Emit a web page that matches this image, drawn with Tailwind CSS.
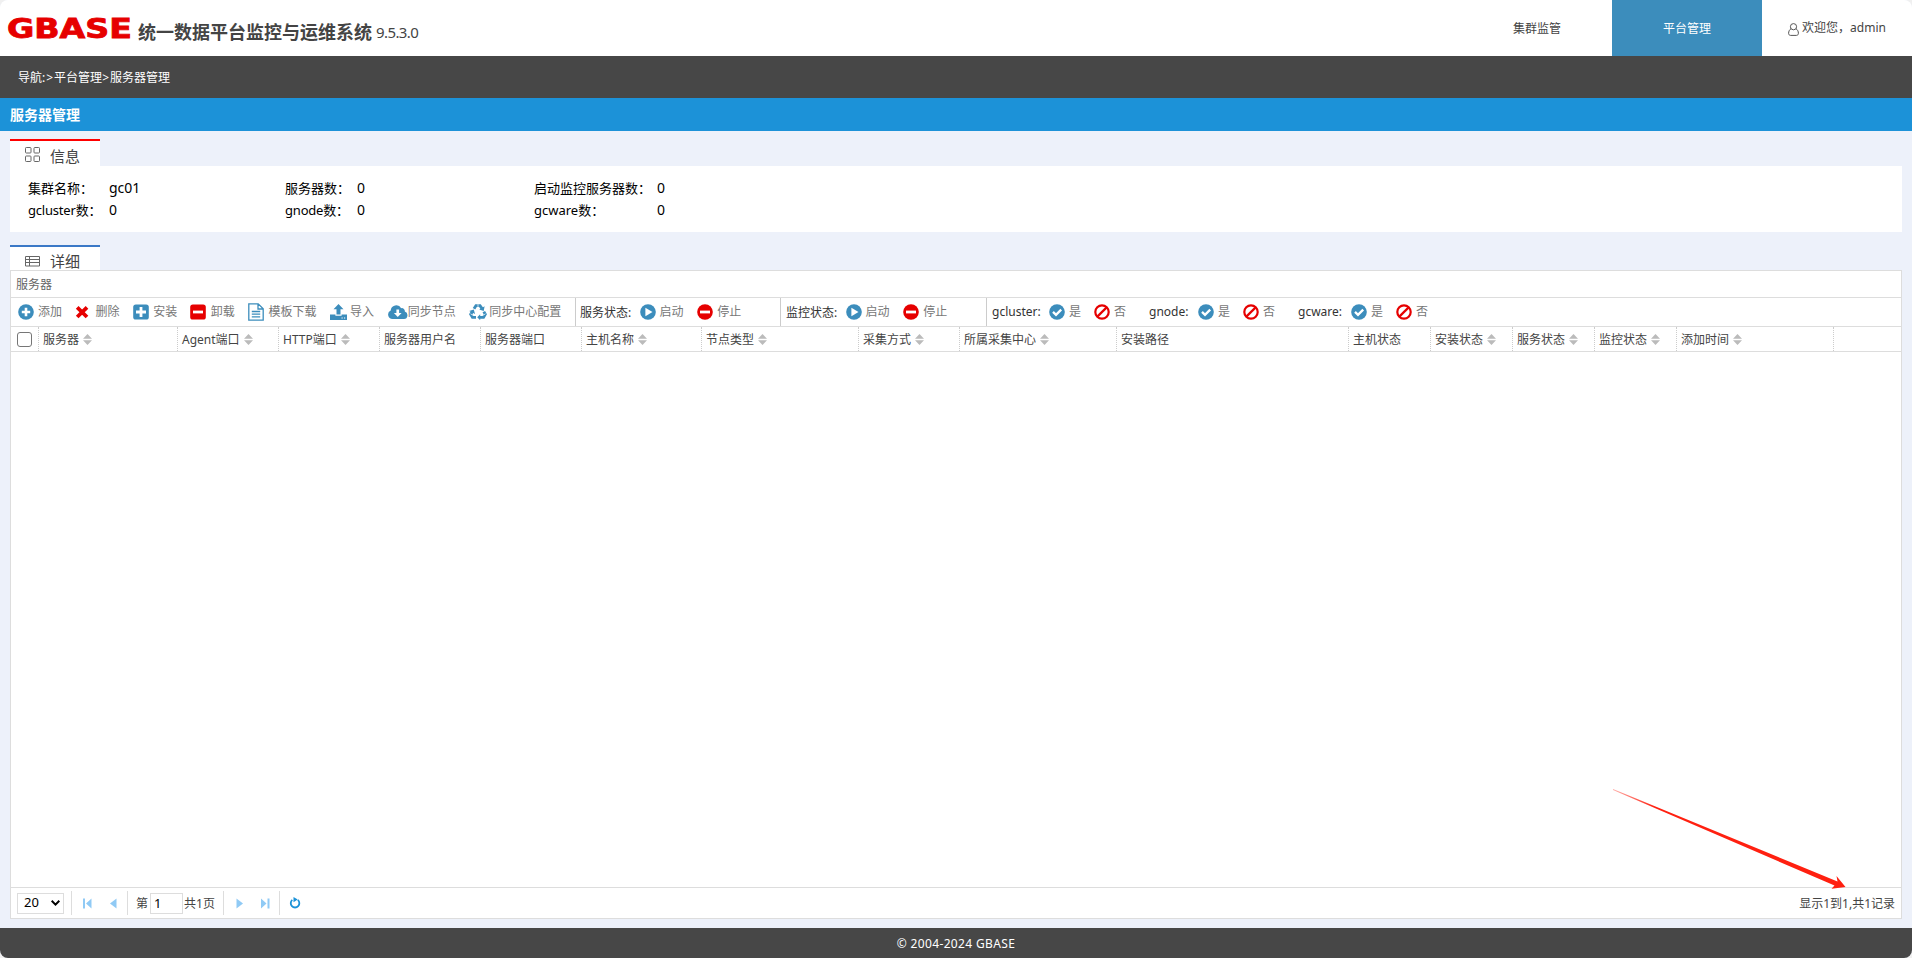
<!DOCTYPE html>
<html lang="zh-CN">
<head>
    <meta charset="UTF-8">
    <meta name="viewport" content="width=device-width, initial-scale=1.0">
    <title>服务器管理</title>
    <script src="https://cdn.jsdelivr.net/npm/@tailwindcss/browser@4"></script>
</head>
<body class="bg-[#f0f0f0] font-['Noto_Sans','Noto_Sans_CJK_SC',sans-serif] text-xs text-[#444]">
    <!-- Icon symbols -->
    <svg class="hidden">
        <symbol id="i-add" viewBox="0 0 16 16"><circle cx="8" cy="8" r="7.8" fill="#3c8dbc"/><path d="M8 3.8v8.4M3.8 8h8.4" stroke="#fff" stroke-width="2.6"/></symbol>
        <symbol id="i-del" viewBox="0 0 16 16"><path d="M3.2 3.4l9.8 9.6M13 3.4l-9.8 9.6" stroke="#e60000" stroke-width="3.8"/></symbol>
        <symbol id="i-plus" viewBox="0 0 16 16"><rect x=".2" y=".4" width="15.6" height="15.2" rx="2.6" fill="#3c8dbc"/><path d="M8 3v10M3 8h10" stroke="#fff" stroke-width="2.8"/></symbol>
        <symbol id="i-minus" viewBox="0 0 16 16"><rect x=".2" y=".4" width="15.6" height="15.2" rx="2.6" fill="#e60000"/><path d="M3 8h10" stroke="#fff" stroke-width="2.8"/></symbol>
        <symbol id="i-file" viewBox="0 0 16 18"><path d="M.8 .8h9.4l5 5v11.4H.8zM10 .8v5.2h5.2M3.8 8.5h8.4M3.8 11.2h8.4M3.8 13.9h8.4" fill="none" stroke="#3c8dbc" stroke-width="1.3"/></symbol>
        <symbol id="i-upload" viewBox="0 0 17 16"><path d="M8.5 0l5 5.3h-3v5.2h-4V5.300h-3zM0 10.600h5.400v1.200h6.200v-1.200H17V16H0z" fill="#3c8dbc"/><path d="M11.500 14h1.200M14 14h1.200" stroke="#fff"/></symbol>
        <symbol id="i-cloud" viewBox="0 0 20 14"><path d="M4.500 14A4.400 4.400 0 0 1 2.700 5.600 5.600 5.600 0 0 1 13.200 3.200 3 3 0 0 1 16.800 6.600 3.800 3.800 0 0 1 16 14z" fill="#3c8dbc"/><path d="M8.400 4.500h2.700v3.600h2.500l-3.850 4-3.850-4h2.500z" fill="#fff"/></symbol>
        <symbol id="i-recycle" viewBox="0 0 18 16"><path d="M5 4.800L7 1.600h4L13 4.600M14.800 7.600l1.500 2.700-1.800 3.100h-4M7 13.400H3.500L1.700 10.300 3.400 7.500" fill="none" stroke="#3c8dbc" stroke-width="2.900"/><path d="M15.600 2.200l-.9 4.700-4.500-1.400zM11.200 10.200v6l-3-3zM.2 7l4.600-1.400 1.200 4.500z" fill="#3c8dbc"/><path d="M9 .2v3M1.500 9.800l2.400 1.500M16.500 9.800l-2.400 1.500" stroke="#fff" stroke-width=".7"/></symbol>
        <symbol id="i-play" viewBox="0 0 16 16"><circle cx="8" cy="8" r="7.800" fill="#3c8dbc"/><path d="M5.400 3.700v8.600L12.500 8z" fill="#fff"/></symbol>
        <symbol id="i-stop" viewBox="0 0 16 16"><circle cx="8" cy="8" r="7.800" fill="#e60000"/><path d="M3 8h10" stroke="#fff" stroke-width="2.800"/></symbol>
        <symbol id="i-yes" viewBox="0 0 16 16"><circle cx="8" cy="8" r="7.800" fill="#3c8dbc"/><path d="M4 7.900l3 3 5.200-5.300" fill="none" stroke="#fff" stroke-width="2.300"/></symbol>
        <symbol id="i-no" viewBox="0 0 16 16"><circle cx="8" cy="8" r="6.700" fill="none" stroke="#e60000" stroke-width="2.200"/><path d="M3.600 12.400l8.800-8.800" stroke="#e60000" stroke-width="2.200"/></symbol>
        <symbol id="i-sort" viewBox="0 0 9 11"><path d="M0 4.700L4.500 0 9 4.700zM0 6.300h9L4.500 11z" fill="#bbb"/></symbol>
    </svg>

    <div class="flex h-[958px] w-[1912px] flex-col overflow-hidden rounded-lg bg-[#edf1fa]">
        <header class="flex h-14 shrink-0 bg-white">
            <div class="flex flex-1 items-center pl-[7px]">
                <svg width="125" height="32" class="shrink-0">
                    <text x="0" y="26" textLength="125" lengthAdjust="spacingAndGlyphs" fill="#e60000" stroke="#e60000" stroke-width=".8" font-family="DejaVu Sans" font-weight="bold" font-size="26">GBASE</text>
                </svg>
                <h1 class="mt-2 ml-1.5 text-lg leading-6 font-bold">统一数据平台监控与运维系统</h1>
                <span class="mt-2 ml-1 text-[15px] leading-6 tracking-[-0.6px]">9.5.3.0</span>
            </div>
            <nav class="flex text-center leading-[58px]">
                <a class="w-[150px]">集群监管</a>
                <a class="w-[150px] bg-[#3c8dbc] text-white">平台管理</a>
                <a class="flex w-[150px] items-center justify-center gap-[3px]">
                    <svg width="11" height="13" viewBox="0 0 11 13" fill="none" stroke="#555" class="mt-0.5"><circle cx="5.500" cy="3.700" r="3.100"/><path d="M3 5.700C1.400 6.700.6 8.500.6 10.300c0 1.300.8 2.100 2 2.100h5.800c1.200 0 2-.8 2-2.100C10.400 8.500 9.600 6.700 8 5.700"/></svg>
                    <span>欢迎您，admin</span>
                </a>
            </nav>
        </header>
        <div class="h-[42px] shrink-0 bg-[#474747] pl-[18px] leading-[43px] text-white">导航<span class="tracking-[1px]">:&gt;</span>平台管理<span class="tracking-[1px]">&gt;</span>服务器管理</div>
        <div class="h-[33px] shrink-0 bg-[#1c92d8] pl-2.5 text-sm leading-[34px] font-bold text-white">服务器管理</div>

        <main class="flex flex-1 flex-col px-2.5 pt-2 pb-[9px]">
            <div class="flex h-[27px] w-[90px] border-t-2 border-[#f00] bg-white pl-[15px] text-[15px]">
                <svg width="15" height="15" fill="none" stroke="#666" class="mt-1.5"><rect x=".5" y=".5" width="5.500" height="5.500" rx=".8"/><rect x="9" y=".5" width="5.500" height="5.500" rx=".8"/><rect x=".5" y="9" width="5.500" height="5.500" rx=".8"/><rect x="9" y="9" width="5.500" height="5.500" rx=".8"/></svg>
                <span class="mt-[5px] ml-2.5 leading-5">信息</span>
            </div>
            <div class="grid h-[66px] grid-cols-[81px_176px_72px_177px_123px_1fr] grid-rows-[22px_22px] bg-white pt-3 pl-[18px] text-[13px] leading-[21px] text-black">
                <span>集群名称：</span><span class="text-sm leading-5">gc01</span>
                <span>服务器数：</span><span class="text-sm leading-5">0</span>
                <span>启动监控服务器数：</span><span class="text-sm leading-5">0</span>
                <span class="tracking-[-0.2px]">gcluster数：</span><span class="text-sm leading-5">0</span>
                <span class="tracking-[-0.2px]">gnode数：</span><span class="text-sm leading-5">0</span>
                <span>gcware数：</span><span class="text-sm leading-5">0</span>
            </div>

            <div class="mt-[13px] flex h-[25px] w-[90px] shrink-0 border-t-2 border-[#3b78c6] bg-white pl-[15px] text-[15px]">
                <svg width="15" height="11" fill="none" stroke="#666" class="mt-[9px]"><path d="M.5 .5h14v9.500H.5zM.5 3.500h14M.5 6.500h14M4.500 .5v9.500"/></svg>
                <span class="mt-[5px] ml-2.5 leading-[18px]">详细</span>
            </div>
            <section class="flex flex-1 flex-col border border-[#ddd] bg-white">
                <div class="h-[27px] border-b border-[#ddd] pl-[5px] leading-[27px] text-[#666]">服务器</div>

                <!-- Toolbar -->
                <div class="flex h-[29px] border-b border-[#ddd] leading-[30px] whitespace-nowrap text-[#777]">
                    <div class="flex w-[565px] gap-[9.6px] border-r border-[#ccc] pl-[3px]">
                        <a class="flex items-center"><span class="flex w-6 justify-center"><svg width="16" height="16"><use href="#i-add"/></svg></span>添加</a>
                        <a class="flex items-center"><span class="flex w-6 justify-start pl-0.5"><svg width="16" height="16"><use href="#i-del"/></svg></span>删除</a>
                        <a class="flex items-center"><span class="flex w-6 justify-center"><svg width="16" height="16"><use href="#i-plus"/></svg></span>安装</a>
                        <a class="flex items-center"><span class="flex w-6 justify-start pl-[3px]"><svg width="16" height="16"><use href="#i-minus"/></svg></span>卸载</a>
                        <a class="flex items-center"><span class="flex w-6 justify-center"><svg width="16" height="18"><use href="#i-file"/></svg></span>模板下载</a>
                        <a class="flex items-center"><span class="flex w-6 justify-center"><svg width="17" height="16"><use href="#i-upload"/></svg></span>导入</a>
                        <a class="flex items-center"><span class="flex w-6 justify-end"><svg width="20" height="14"><use href="#i-cloud"/></svg></span>同步节点</a>
                        <a class="flex items-center"><span class="flex w-6 justify-center pl-0.5"><svg width="18" height="16"><use href="#i-recycle"/></svg></span>同步中心配置</a>
                    </div>
                    <div class="flex w-[205px] gap-[9.6px] border-r border-[#ccc] pl-1">
                        <span class="-mr-[5px] w-[51px] text-[#333]">服务状态:</span>
                        <a class="flex items-center"><span class="flex w-6 justify-center"><svg width="16" height="16"><use href="#i-play"/></svg></span>启动</a>
                        <a class="flex items-center"><span class="flex w-6 justify-center"><svg width="16" height="16"><use href="#i-stop"/></svg></span>停止</a>
                    </div>
                    <div class="flex w-[206px] gap-[9.6px] border-r border-[#ccc] pl-[5px]">
                        <span class="-mr-[5px] w-[51px] text-[#333]">监控状态:</span>
                        <a class="flex items-center"><span class="flex w-6 justify-center"><svg width="16" height="16"><use href="#i-play"/></svg></span>启动</a>
                        <a class="flex items-center"><span class="flex w-6 justify-center"><svg width="16" height="16"><use href="#i-stop"/></svg></span>停止</a>
                    </div>
                    <div class="flex pl-[5px]">
                        <span class="w-[53px] leading-[27px] text-[#333]">gcluster:</span>
                        <a class="flex w-[45px] items-center"><span class="flex w-6 justify-center"><svg width="16" height="16"><use href="#i-yes"/></svg></span>是</a>
                        <a class="flex w-[59px] items-center"><span class="flex w-6 justify-center"><svg width="16" height="16"><use href="#i-no"/></svg></span>否</a>
                        <span class="w-[45px] leading-[27px] text-[#333]">gnode:</span>
                        <a class="flex w-[45px] items-center"><span class="flex w-6 justify-center"><svg width="16" height="16"><use href="#i-yes"/></svg></span>是</a>
                        <a class="flex w-[59px] items-center"><span class="flex w-6 justify-center"><svg width="16" height="16"><use href="#i-no"/></svg></span>否</a>
                        <span class="w-[49px] leading-[27px] text-[#333]">gcware:</span>
                        <a class="flex w-[45px] items-center"><span class="flex w-6 justify-center"><svg width="16" height="16"><use href="#i-yes"/></svg></span>是</a>
                        <a class="flex items-center"><span class="flex w-6 justify-center"><svg width="16" height="16"><use href="#i-no"/></svg></span>否</a>
                    </div>
                </div>

                <!-- Grid header, filled from the column list below -->
                <div id="grid-header" class="flex h-[25px] border-b border-[#ddd] leading-6">
                    <div class="flex w-7 items-center border-r border-dotted border-[#ccc] pl-1.5">
                        <input type="checkbox" class="size-[15px] appearance-none rounded-[3px] border border-[#767676] bg-white">
                    </div>
                </div>
                <div class="flex-1"></div>

                <!-- Pager -->
                <div class="flex h-[31px] items-center border-t border-[#ddd] pl-1.5">
                    <div class="flex h-[21px] w-[47px] items-center justify-between border border-[#ddd] pr-[3px] pl-1.5 text-[13px] text-black">20
                        <svg width="9" height="6" fill="none" stroke="#000" stroke-width="2"><path d="M.7 .8l3.800 3.800L8.300 .8"/></svg>
                    </div>
                    <div class="ml-[7px] flex h-6 w-[57px] items-center border-x border-[#ddd] pl-[11px]">
                        <svg width="9" height="11" fill="#90caf5"><path d="M0 .5h2v10H0zM8.500 .5v10L3 5.500z"/></svg>
                        <svg width="7" height="11" fill="#90caf5" class="ml-[18px]"><path d="M6.500 .5v10L0 5.500z"/></svg>
                    </div>
                    <div class="flex h-6 w-24 items-center border-r border-[#ddd] pl-2">
                        <span class="mt-0.5">第</span>
                        <input value="1" class="ml-0.5 h-[21px] w-[33px] border border-[#ddd] pl-[3px] text-[13px] text-black">
                        <span class="mt-0.5 ml-px whitespace-nowrap">共1页</span>
                    </div>
                    <div class="flex h-6 w-14 items-center border-r border-[#ddd] pl-3">
                        <svg width="7" height="11" fill="#90caf5"><path d="M.5 .5v10L7 5.500z"/></svg>
                        <svg width="9" height="11" fill="#90caf5" class="ml-[18px]"><path d="M6.500 .5h2v10h-2zM0 .5v10L5.500 5.500z"/></svg>
                    </div>
                    <svg width="12" height="12" class="ml-[9px]" fill="none"><path d="M3.300 2.900A4.300 4.300 0 1 0 8.800 2.900" stroke="#1c92d8" stroke-width="1.800"/><path d="M4.500 0v5.200L8.700 2.500z" fill="#1c92d8"/></svg>
                    <span class="mt-0.5 mr-1.5 ml-auto">显示1到1,共1记录</span>
                </div>
            </section>
        </main>

        <footer class="h-[30px] shrink-0 bg-[#474747] text-center leading-[31px] tracking-[0.35px] text-white">© 2004-2024 GBASE</footer>
    </div>

    <!-- Arrow pointing at the record count -->
    <svg width="234" height="106" class="pointer-events-none absolute top-[786px] left-[1613px]">
        <defs>
            <linearGradient id="fade" x1="0" y1="0" x2="1" y2="0">
                <stop offset="0" stop-color="#ff2010" stop-opacity=".35"/>
                <stop offset=".18" stop-color="#ff2010"/>
            </linearGradient>
        </defs>
        <path d="M0 3L0 4L221.500 99.500L218.500 102.800L232.500 101L223.500 90L224.500 95.500L0 3z" fill="url(#fade)"/>
    </svg>

    <script>
        const columns = [
            ['服务器', 139, true], ['Agent端口', 101, true], ['HTTP端口', 101, true],
            ['服务器用户名', 101, false], ['服务器端口', 101, false], ['主机名称', 120, true],
            ['节点类型', 157, true], ['采集方式', 101, true], ['所属采集中心', 157, true],
            ['安装路径', 232, false], ['主机状态', 82, false], ['安装状态', 82, true],
            ['服务状态', 82, true], ['监控状态', 82, true], ['添加时间', 157, true],
        ];
        document.getElementById('grid-header').insertAdjacentHTML('beforeend', columns.map(([name, width, sortable]) => `
            <div class="flex shrink-0 items-center border-r border-dotted border-[#ccc] pl-1" style="width:${width}px">
                <span class="mt-0.5">${name}</span>${sortable ? '<svg width="9" height="11" class="ml-1"><use href="#i-sort"/></svg>' : ''}
            </div>`).join(''));
    </script>
</body>
</html>
